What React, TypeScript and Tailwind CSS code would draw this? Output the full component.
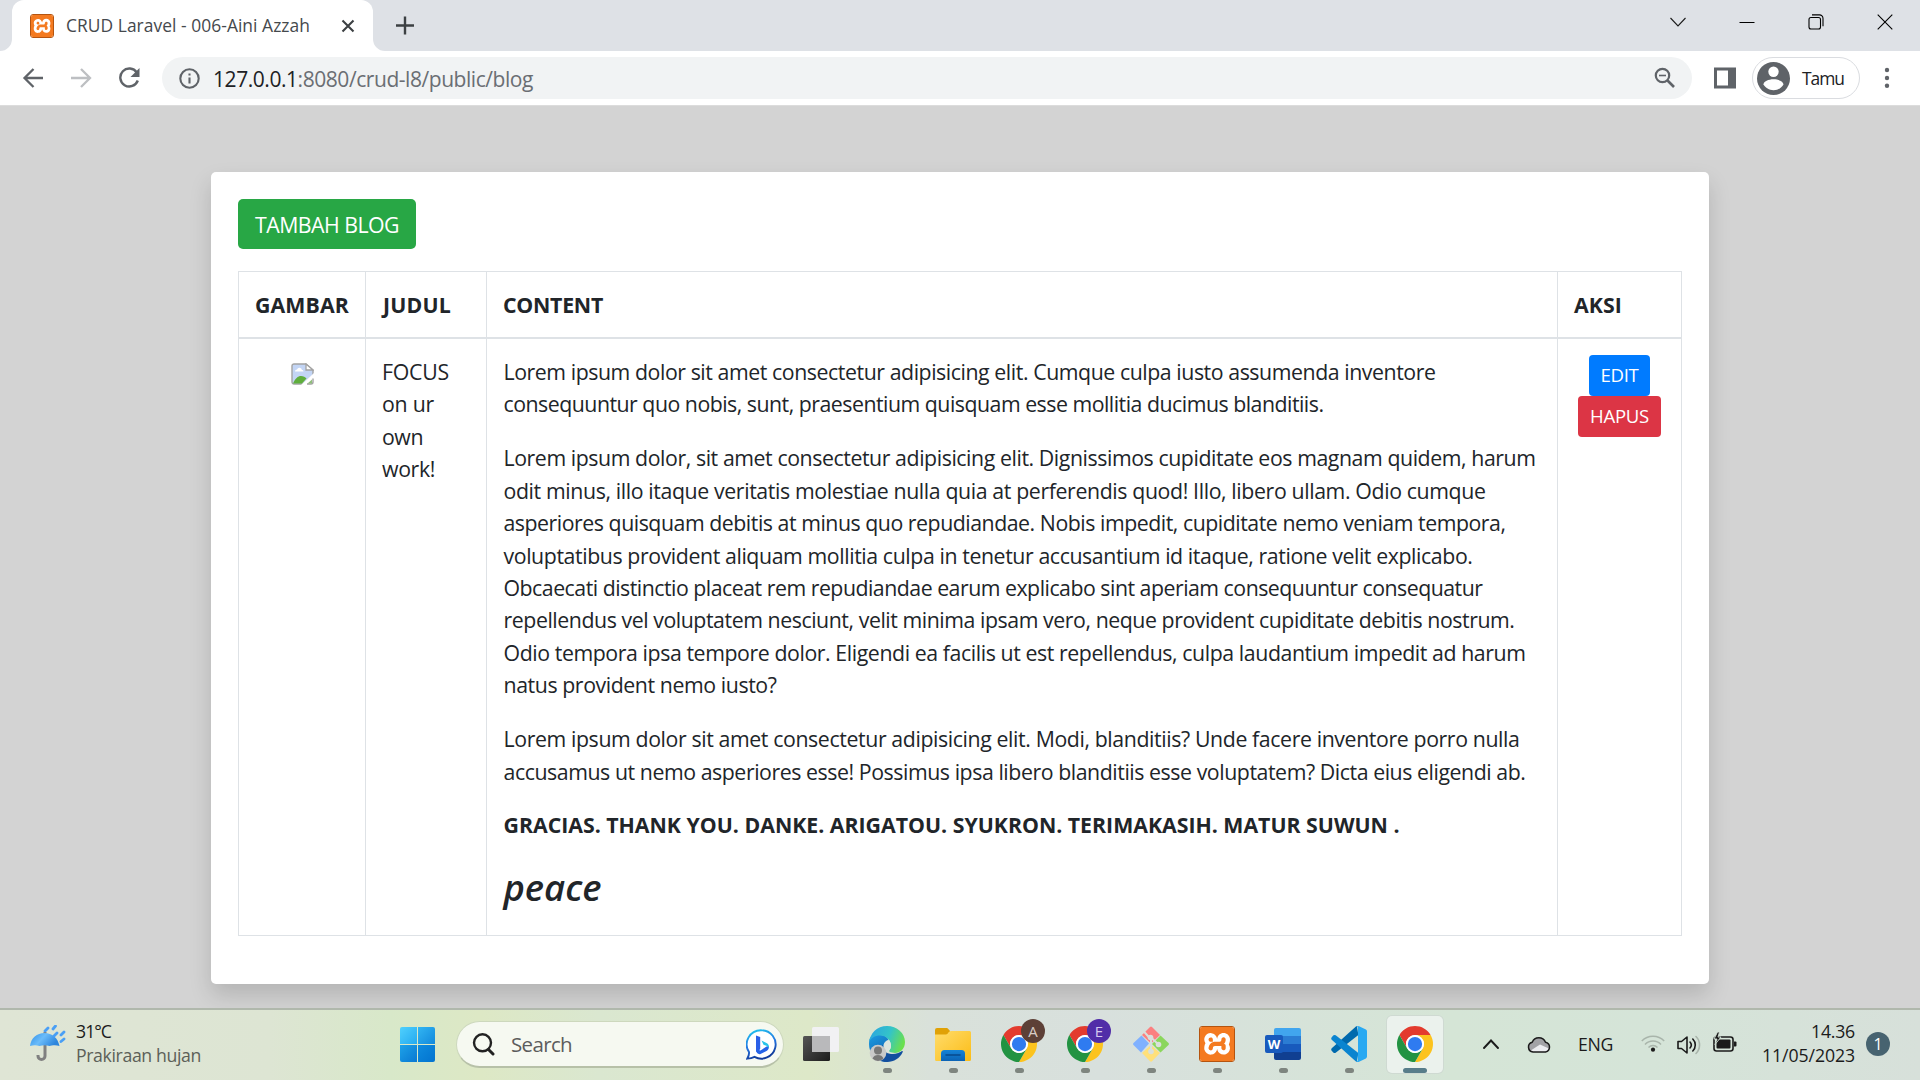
import React, { useLayoutEffect, useRef } from "react";
import { SiXampp } from "react-icons/si";

const SANS = "font-['Open_Sans','Noto_Sans',sans-serif]";

/* A single line of text whose tracking is adjusted to fill the given width. */
function Line({ w, className = "", children }: { w: number; className?: string; children: React.ReactNode }) {
  const ref = useRef<HTMLSpanElement>(null);
  useLayoutEffect(() => {
    const el = ref.current;
    if (!el) return;
    const fit = () => {
      el.style.letterSpacing = "0px";
      const n = (el.textContent || "").length;
      el.style.letterSpacing = `${(w - el.getBoundingClientRect().width) / n}px`;
    };
    fit();
    document.fonts?.ready.then(fit);
  }, [w]);
  return (
    <span className={`block w-fit whitespace-nowrap ${className}`} ref={ref}>
      {children}
    </span>
  );
}

function Xampp({ className }: { className: string }) {
  return (
    <span className={`flex items-center justify-center overflow-hidden rounded-[3px] border border-[#b5540f] bg-white ${className}`}>
      <SiXampp className="size-full shrink-0 scale-[1.04] text-[#f47a20]" />
    </span>
  );
}

function TabStrip() {
  return (
    <div className="flex h-[51px] items-end bg-[#dee1e6]">
      <svg className="h-[51px] w-3 shrink-0" viewBox="0 0 12 51">
        <path d="M12 39A12 12 0 0 1 0 51H12Z" fill="#fff" />
      </svg>
      <div className="flex h-[51px] w-[361px] items-center rounded-t-[12px] bg-white pl-[18px]">
        <Xampp className="size-6" />
        <div className="mb-px ml-3 w-[275px] text-[17.4px] leading-[24px] text-[#45494d]">
          <Line w={244}>CRUD Laravel - 006-Aini Azzah</Line>
        </div>
        <svg className="size-[14px]" viewBox="0 0 14 14" fill="none" stroke="#3c4043" strokeWidth="2.1">
          <path d="M1.5 1.5l11 11M12.500 1.500l-11 11" />
        </svg>
      </div>
      <svg className="h-[51px] w-3 shrink-0" viewBox="0 0 12 51">
        <path d="M0 39A12 12 0 0 0 12 51H0Z" fill="#fff" />
      </svg>
      <svg className="ml-[11px] h-[51px] w-[18px]" viewBox="0 0 18 51" fill="none" stroke="#3c4043" strokeWidth="2.4">
        <path d="M0 25.500h18M9 16.500v18" />
      </svg>
      <div className="ml-auto flex h-[43px] items-center gap-[53px] self-start pr-[27px]">
        <svg className="size-4" viewBox="0 0 16 16" fill="none" stroke="#1a1a1a" strokeWidth="1.1">
          <path d="M.5 4l7.500 8 7.500-8" />
        </svg>
        <svg className="size-4" viewBox="0 0 16 16" fill="none" stroke="#000" strokeWidth="1">
          <path d="M.5 8.500h15" />
        </svg>
        <svg className="size-4" viewBox="0 0 16 16" fill="none" stroke="#000" strokeWidth="1.1">
          <rect x="1" y="3.500" width="11.500" height="11.500" rx="2" />
          <path d="M4 .9h7.500a3.500 3.500 0 0 1 3.500 3.500v7.800" />
        </svg>
        <svg className="size-4" viewBox="0 0 16 16" fill="none" stroke="#000" strokeWidth="1.1">
          <path d="M.7.7l14.600 14.600M15.300.7L.7 15.300" />
        </svg>
      </div>
    </div>
  );
}

function Toolbar() {
  return (
    <div className="flex h-[54px] items-center bg-white pl-[22px]">
      <svg className="size-[22px]" viewBox="0 0 22 22" fill="none" stroke="#5f6368" strokeWidth="2.3">
        <path d="M21 11H3M11.500 2L2.500 11l9 9" />
      </svg>
      <svg className="ml-[27px] size-[22px]" viewBox="0 0 22 22" fill="none" stroke="#bdbfc2" strokeWidth="2.3">
        <path d="M0 11h18M10 2l9 9-9 9" />
      </svg>
      <svg className="ml-[25px] size-[22px]" viewBox="0 0 22 22" fill="none" stroke="#5f6368" strokeWidth="2.4">
        <path d="M18.800 5.500A9 9 0 1 0 19.800 13.500" />
        <path d="M21.500 1v9h-9z" fill="#5f6368" stroke="none" />
      </svg>
      <div className="ml-[22px] flex h-[42px] w-[1530px] items-center rounded-full bg-[#f1f3f4] pl-[17px] pr-[16px]">
        <svg className="size-[21px]" viewBox="0 0 21 21" fill="none" stroke="#5f6368" strokeWidth="2.100">
          <circle cx="10.500" cy="10.500" r="9.200" />
          <path d="M10.500 9.500v6M10.500 5.400v2.200" />
        </svg>
        <div className="ml-[13px] mt-px text-[21px] leading-[30px] text-[#6a6e73]">
          <Line w={320}>
            <span className="text-[#202124]">127.0.0.1</span>:8080/crud-l8/public/blog
          </Line>
        </div>
        <svg className="ml-auto size-[22px]" viewBox="0 0 22 22" fill="none" stroke="#5f6368" strokeWidth="2.200">
          <circle cx="8.500" cy="8.500" r="6.700" />
          <path d="M5 8.500h7" strokeWidth="1.600" />
          <path d="M13.500 13.500l6.500 6.500" strokeWidth="2.700" />
        </svg>
      </div>
      <svg className="ml-[22px] size-[22px]" viewBox="0 0 22 22">
        <path fillRule="evenodd" d="M0 .5h22v21H0zM3 3.500v15h11v-15z" fill="#5f6368" />
      </svg>
      <div className="ml-[16px] flex h-[42px] w-[108px] items-center rounded-full border border-[#dadce0] pl-[4px]">
        <svg className="size-[33px]" viewBox="0 0 33 33">
          <circle cx="16.500" cy="16.500" r="16.500" fill="#5f6368" />
          <circle cx="16.500" cy="9.800" r="5.200" fill="#fff" />
          <path d="M6.500 22.500c0-3 5-5.200 10-5.200s10 2.200 10 5.200c-2 3.200-5.500 5.700-10 5.700s-8-2.500-10-5.700z" fill="#fff" />
        </svg>
        <div className="mb-px ml-[12px] text-[17.400px] leading-[24px] text-[#202124]">
          <Line w={42}>Tamu</Line>
        </div>
      </div>
      <svg className="ml-[24px] h-[22px] w-[6px]" viewBox="0 0 6 22" fill="#5f6368">
        <circle cx="3" cy="3" r="2.200" />
        <circle cx="3" cy="11" r="2.200" />
        <circle cx="3" cy="18.700" r="2.200" />
      </svg>
    </div>
  );
}

function BrokenImage() {
  return (
    <svg className="h-[22px] w-[23px]" viewBox="0 0 23 22">
      <path d="M3 1h12l7 6v5.500L12 21H3a2 2 0 0 1-2-2V3a2 2 0 0 1 2-2z" fill="#c3d5f5" stroke="#a3a3a3" strokeWidth="1.400" />
      <path d="M15 1v6h7z" fill="#fff" stroke="#a3a3a3" strokeWidth="1.300" />
      <path d="M4 8.500a2 2 0 0 1 2-2 2.600 2.600 0 0 1 5 .5c1 0 1.500.7 1.500 1.500z" fill="#fff" />
      <path d="M2 20.500c2-5 5-7.500 8-7.500 2.500 0 4 1 5.500 2.500L11 20.500z" fill="#5fae3c" />
      <path d="M23 10L10 22h5l8-7z" fill="#fff" />
      <path d="M22 15.500V19a2 2 0 0 1-2 2h-4" fill="none" stroke="#a3a3a3" strokeWidth="1.400" />
      <path d="M16.500 20.500l4.500-4v4z" fill="#8fbf7a" />
    </svg>
  );
}

const PARAGRAPHS: [string, number][][] = [
  [
    ["Lorem ipsum dolor sit amet consectetur adipisicing elit. Cumque culpa iusto assumenda inventore", 932],
    ["consequuntur quo nobis, sunt, praesentium quisquam esse mollitia ducimus blanditiis.", 820],
  ],
  [
    ["Lorem ipsum dolor, sit amet consectetur adipisicing elit. Dignissimos cupiditate eos magnam quidem, harum", 1032],
    ["odit minus, illo itaque veritatis molestiae nulla quia at perferendis quod! Illo, libero ullam. Odio cumque", 982],
    ["asperiores quisquam debitis at minus quo repudiandae. Nobis impedit, cupiditate nemo veniam tempora,", 1002],
    ["voluptatibus provident aliquam mollitia culpa in tenetur accusantium id itaque, ratione velit explicabo.", 969],
    ["Obcaecati distinctio placeat rem repudiandae earum explicabo sint aperiam consequuntur consequatur", 979],
    ["repellendus vel voluptatem nesciunt, velit minima ipsam vero, neque provident cupiditate debitis nostrum.", 1011],
    ["Odio tempora ipsa tempore dolor. Eligendi ea facilis ut est repellendus, culpa laudantium impedit ad harum", 1022],
    ["natus provident nemo iusto?", 273],
  ],
  [
    ["Lorem ipsum dolor sit amet consectetur adipisicing elit. Modi, blanditiis? Unde facere inventore porro nulla", 1016],
    ["accusamus ut nemo asperiores esse! Possimus ipsa libero blanditiis esse voluptatem? Dicta eius eligendi ab.", 1022],
  ],
];

function Page() {
  return (
    <div className="h-[903px] overflow-hidden border-t border-[#dcdcdc] bg-[#d3d3d3] pl-[211px] pt-[66px]">
      <main className="h-[812px] w-[1498px] rounded-[5px] bg-white px-[27px] pt-[27px] text-[21.300px] leading-[32.400px] text-[#212529] shadow-[0_11px_22px_rgba(0,0,0,0.15)]">
        <button className="flex h-[50px] w-[178px] items-center rounded-[5px] bg-[#28a745] pl-[17px] pt-[3px] text-white">
          <Line w={144}>TAMBAH BLOG</Line>
        </button>
        <div className="mt-[22px] grid h-[665px] w-[1444px] grid-cols-[127px_121px_1071px_1fr] grid-rows-[67px_1fr] border border-[#dee2e6]">
          {(
            [
              ["GAMBAR", 94],
              ["JUDUL", 68],
              ["CONTENT", 100],
              ["AKSI", 48],
            ] as [string, number][]
          ).map(([t, w]) => (
            <div
              key={t}
              className={`border-b-2 border-r border-[#dee2e6] pt-[17px] font-bold [&:nth-child(4)]:border-r-0 ${
                t === "JUDUL" ? "pl-[17px]" : "pl-4"
              }`}
            >
              <Line w={w}>{t}</Line>
            </div>
          ))}
          <div className="flex items-start justify-center border-r border-[#dee2e6] pt-[24px]">
            <BrokenImage />
          </div>
          <div className="border-r border-[#dee2e6] pl-4 pt-[17px]">
            <Line w={67}>FOCUS</Line>
            <Line w={52}>on ur</Line>
            <Line w={41}>own</Line>
            <Line w={53}>work!</Line>
          </div>
          <div className="border-r border-[#dee2e6] pl-[16.500px] pt-[17px]">
            {PARAGRAPHS.map((lines, i) => (
              <p key={i} className="mb-[21.600px]">
                {lines.map(([t, w]) => (
                  <Line key={t} w={w}>
                    {t}
                  </Line>
                ))}
              </p>
            ))}
            <p className="-mt-px mb-[21.600px] font-bold">
              <Line w={896}>GRACIAS. THANK YOU. DANKE. ARIGATOU. SYUKRON. TERIMAKASIH. MATUR SUWUN .</Line>
            </p>
            <h3 className="pt-[2px] text-[36.500px] font-semibold italic leading-[45.400px]">
              <Line w={98}>peace</Line>
            </h3>
          </div>
          <div className="flex flex-col items-center pt-4 text-[18.600px] leading-[28px] text-white">
            <div className="flex h-[41px] w-[61px] items-center justify-center rounded-[4px] bg-[#007bff] pb-px">
              <Line w={38}>EDIT</Line>
            </div>
            <div className="flex h-[41px] w-[83px] items-center justify-center rounded-[4px] bg-[#dc3545] pb-px">
              <Line w={59}>HAPUS</Line>
            </div>
          </div>
        </div>
      </main>
    </div>
  );
}

function Chrome() {
  return (
    <svg className="size-9" viewBox="0 0 48 48">
      <path d="M24 12H44.780A24 24 0 0 0 3.220 12L13.610 30A12 12 0 0 1 24 12z" fill="#e33b2e" />
      <path d="M34.390 30L24 48A24 24 0 0 0 44.780 12H24A12 12 0 0 1 34.390 30z" fill="#fcc31e" />
      <path d="M13.610 30L3.220 12A24 24 0 0 0 24 48L34.390 30A12 12 0 0 1 13.610 30z" fill="#229342" />
      <circle cx="24" cy="24" r="12" fill="#fff" />
      <circle cx="24" cy="24" r="9.500" fill="#2f7bf0" />
    </svg>
  );
}

function Badged({ letter, className }: { letter: string; className: string }) {
  return (
    <div className="relative">
      <Chrome />
      <span className={`absolute -top-[7px] left-[20px] flex size-6 items-center justify-center rounded-full text-[15px] leading-none ${className}`}>
        {letter}
      </span>
    </div>
  );
}

function TaskView() {
  return (
    <svg className="size-9" viewBox="0 0 36 36">
      <defs>
        <linearGradient id="tv" x1="0" y1="0" x2="1" y2="1">
          <stop offset="0" stopColor="#555" />
          <stop offset="1" stopColor="#1c1c1c" />
        </linearGradient>
      </defs>
      <rect x="0" y="10" width="27" height="25" rx="1.500" fill="url(#tv)" />
      <rect x="9" y="1" width="27" height="25" rx="1.500" fill="#f1f1f3" />
      <rect x="9" y="10" width="18" height="16" fill="#b9b9bb" />
    </svg>
  );
}

function Edge() {
  return (
    <svg className="size-9 overflow-visible" viewBox="0 0 36 36">
      <defs>
        <linearGradient id="eg" x1="0" y1="0.200" x2="1" y2="0.500">
          <stop offset="0" stopColor="#2aa5e0" />
          <stop offset="0.550" stopColor="#34c4c8" />
          <stop offset="1" stopColor="#6be04c" />
        </linearGradient>
        <linearGradient id="eb" x1="0" y1="0" x2="0.600" y2="1">
          <stop offset="0" stopColor="#1b9de2" />
          <stop offset="1" stopColor="#0f5cae" />
        </linearGradient>
      </defs>
      <path d="M0 18C0 8 5 9 12 9c5 0 8 4 8 7-4 1-6 4-5 8 1 5 6 7 10 7-3 3-6 5-9 5C6 35 0 27 0 18z" fill="url(#eb)" />
      <path d="M14 19c-1 5 3 9 9 9 5 0 8-2 10-3 1 0 1 .5.500 1.500C31 32 25 36 18 36c-3 0-6-1-8-3-1-5 0-11 4-14z" fill="#124f9e" />
      <path d="M0 17C1 7 8 0 18 0s18 7 18 16c0 7-5 11-10 11-4 0-6-1-6-2 0-1 2-2 2-5 0-6-5-10.500-11-10.500C6 9.500 1 12 0 17z" fill="url(#eg)" />
      <path d="M14.500 19c.5-3 3-5 5.500-5 1.500 1.800 2 4 2 6 0 3-2 4-2 5 0 1 2 2 6 2-3 1-7 0-9-2-1.800-1.800-2.700-4-2.500-6z" fill="#dce4de" />
      <circle cx="9" cy="27" r="8.300" fill="#c9c9c9" />
      <circle cx="9" cy="24.500" r="4" fill="#777" />
      <path d="M3.500 32.500c1-2.500 3-3.500 5.500-3.500s4.500 1 5.500 3.500A8 8 0 0 1 9 35a8 8 0 0 1-5.500-2.500z" fill="#777" />
    </svg>
  );
}

function Folder() {
  return (
    <svg className="size-9" viewBox="0 0 36 36">
      <defs>
        <linearGradient id="fo" x1="0" y1="0" x2="1" y2="1">
          <stop offset="0" stopColor="#ffdc6b" />
          <stop offset="1" stopColor="#fbbc16" />
        </linearGradient>
        <linearGradient id="fb" x1="0" y1="0" x2="0" y2="1">
          <stop offset="0" stopColor="#1583d6" />
          <stop offset="1" stopColor="#0b63b5" />
        </linearGradient>
      </defs>
      <path d="M0 4a2 2 0 0 1 2-2h9c1.500 0 2 .5 4 3v6H0z" fill="#e0a106" />
      <path d="M0 8.500h11c2 0 2.500-3.500 5-3.500h18.500A1.500 1.500 0 0 1 36 6.500v27a1.500 1.500 0 0 1-1.500 1.500h-33A1.500 1.500 0 0 1 0 33.500z" fill="url(#fo)" />
      <path d="M6 35v-7.500a3.500 3.500 0 0 1 3.500-3.500h17a3.500 3.500 0 0 1 3.500 3.500V35z" fill="url(#fb)" />
      <path d="M11 29h14" stroke="#074a8c" strokeWidth="1.500" strokeLinecap="round" />
    </svg>
  );
}

function Git() {
  return (
    <svg className="size-9" viewBox="0 0 36 36">
      <path d="M17 .9a1.500 1.500 0 0 1 2 0l8 8-9 8.500-9-8.500z" fill="#fb8080" />
      <path d="M27.500 9.500l8 7.500a1.500 1.500 0 0 1 0 2l-8 7.500-8.500-8.500z" fill="#8bd65c" />
      <path d="M8.500 9.500l7.500 8-8 9L.5 19a1.500 1.500 0 0 1 0-2z" fill="#80b1ff" />
      <path d="M18 19l9 8-8 8.200a1.500 1.500 0 0 1-2 0L9 27z" fill="#ffe07a" />
      <path d="M10 4.500l8 9V26M17.500 11l8 7.500" fill="none" stroke="#d9e0dc" strokeWidth="2" />
      <circle cx="17.500" cy="11.500" r="2.800" fill="#d9e0dc" />
      <circle cx="25.500" cy="18.500" r="2.800" fill="#d9e0dc" />
      <circle cx="18" cy="25.500" r="2.800" fill="#d9e0dc" />
    </svg>
  );
}

function Word() {
  return (
    <div className="relative flex size-9 items-center justify-end">
      <div className="mb-px h-8 w-[27px] overflow-hidden rounded-[2px]">
        <div className="h-2 bg-[#41a5ee]" />
        <div className="h-2 bg-[#2b7cd3]" />
        <div className="h-2 bg-[#185abd]" />
        <div className="h-2 bg-[#103f91]" />
      </div>
      <span className="absolute left-0 top-[9px] flex size-[18px] items-center justify-center rounded-[2px] bg-[#185abd] text-[13px] font-bold leading-none text-white">
        W
      </span>
    </div>
  );
}

function VSCode() {
  return (
    <svg className="size-9" viewBox="0 0 100 100">
      <path d="M72 1l4 24L13 74q-3 2-6 0L2 69q-3-3 0-7L70 1z" fill="#0069ad" />
      <path d="M72 99l4-24L13 26q-3-2-6 0L2 31q-3 4 0 7L70 99z" fill="#0a84d0" />
      <path d="M70 1q4-2 8 0l19 9q3 2 3 5v70q0 3-3 5l-19 9q-4 2-8 0 5 0 5-5V6q0-5-5-5z" fill="#29a9f2" />
    </svg>
  );
}

function Slot({ children, active = false, dot = true }: { children: React.ReactNode; active?: boolean; dot?: boolean }) {
  return (
    <div
      className={`flex h-[57px] w-14 shrink-0 flex-col items-center rounded-[5px] pt-[10px] ${
        active ? "bg-[#ebf2ed] shadow-[0_0_0_1px_#cfdad2]" : ""
      }`}
    >
      {children}
      {dot && <span className={`mt-[6px] h-[5px] rounded-full ${active ? "w-6 bg-[#587d8a]" : "w-[9px] bg-[#7e857f]"}`} />}
    </div>
  );
}

function Taskbar() {
  return (
    <div className="flex h-[72px] items-center border-t-2 border-[#b0b8ac] bg-[linear-gradient(90deg,#dfe5d5_0px,#dde5d3_270px,#d8e8c9_390px,#dde8c5_480px,#dae7d0_600px,#dde8c8_810px,#d9e1da_930px,#d8e0dd_1100px,#d5e5d6_1450px,#d5e4d8_1650px,#d7e0da_1920px)] text-[17.700px] leading-[24px] text-[#1b1b1b]">
      <svg className="mb-[3px] ml-[29px] size-[37px]" viewBox="0 0 37 37">
        <defs>
          <linearGradient id="um" x1="0" y1="0" x2="1" y2="0.400">
            <stop offset="0" stopColor="#2f8fe8" />
            <stop offset="0.500" stopColor="#6bbcfa" />
            <stop offset="1" stopColor="#2e86dd" />
          </linearGradient>
        </defs>
        <path d="M16 7v24a3.500 3.500 0 0 1-7 0v-1" fill="none" stroke="#808080" strokeWidth="3" />
        <path d="M1 21C2 13 8 8 15.500 8S29 13 30.500 21c-4-1.200-8-.5-10 0-3-1-7-1-10 0-3-1-6-1-9.500 0z" fill="url(#um)" />
        <path d="M19 3l-3 3M26.500 1l-2.500 3M28 8l-3 3M35 7l-3 3M35 14l-3 2.500" stroke="#4a9ff5" strokeWidth="2.800" strokeLinecap="round" />
      </svg>
      <div className="mb-[2px] ml-[10px] h-[50px] w-[324px]">
        <Line w={35}>31°C</Line>
        <Line w={125} className="text-[#5c6058]">
          Prakiraan hujan
        </Line>
      </div>
      <div className="mb-px grid size-[35px] grid-cols-2 gap-px">
        <span className="rounded-tl-[2px] bg-linear-to-br from-[#4fd0fd] to-[#22aaf0]" />
        <span className="rounded-tr-[2px] bg-linear-to-br from-[#32b5f2] to-[#1189dc]" />
        <span className="rounded-bl-[2px] bg-linear-to-br from-[#1ea2e8] to-[#0a78d2]" />
        <span className="rounded-br-[2px] bg-linear-to-br from-[#0f8cdf] to-[#0473cf]" />
      </div>
      <div className="mb-px ml-[21px] flex h-[47px] w-[328px] items-center rounded-full border border-b-2 border-[#cdd8bd] border-b-[#b7c1a8] bg-[#f6f9f1] pl-[15px] pr-[6px]">
        <svg className="size-[23px]" viewBox="0 0 23 23" fill="none" stroke="#222" strokeWidth="2.400" strokeLinecap="round">
          <circle cx="10.500" cy="9.800" r="8.500" />
          <path d="M16.500 16.500L21 21" strokeWidth="3" />
        </svg>
        <div className="ml-[16px] text-[20.500px] text-[#5c5c5c]">
          <Line w={61}>Search</Line>
        </div>
        <svg className="ml-auto size-[31px]" viewBox="0 0 31 31">
          <defs>
            <linearGradient id="bg" x1="0" y1="0" x2="0.300" y2="1">
              <stop offset="0" stopColor="#1fc8f0" />
              <stop offset="0.600" stopColor="#2474e0" />
              <stop offset="1" stopColor="#123c9c" />
            </linearGradient>
          </defs>
          <path d="M15.500 1.200a14.200 14.200 0 1 1-7 26.600c-2 1-4 1.600-7.200 1.800 1.500-2.500 2-4 1.700-6.500A14.200 14.200 0 0 1 15.500 1.200z" fill="#fff" stroke="url(#bg)" strokeWidth="1.900" />
          <path d="M10 6.500l4.200 1.600v11.400l-2.100 4.800-2.100-2z" fill="#2a5fe8" />
          <path d="M10 20.500l4.500 1 6-4 2.500-.5c0 3-1 4-2.500 5l-6 3c-2 .8-4.500-1-4.500-4.500z" fill="#2563e8" />
          <path d="M15.500 11.500l5 2.500c2 1 2.700 2.500 2.500 5-1-2-4-2.500-5.500-3.200z" fill="#26c3ea" />
        </svg>
      </div>
      <div className="mb-px ml-[9px] flex gap-[10px]">
        <Slot dot={false}><TaskView /></Slot>
        <Slot><Edge /></Slot>
        <Slot><Folder /></Slot>
        <Slot><Badged letter="A" className="bg-[#5d4037] text-[#d9ccc7]" /></Slot>
        <Slot><Badged letter="E" className="bg-[#512da8] text-[#d5c9ee]" /></Slot>
        <Slot><Git /></Slot>
        <Slot><Xampp className="size-9" /></Slot>
        <Slot><Word /></Slot>
        <Slot><VSCode /></Slot>
        <Slot active><Chrome /></Slot>
      </div>
      <svg className="mb-[2px] ml-[40px] h-3 w-4 shrink-0" viewBox="0 0 16 12" fill="none" stroke="#1b1b1b" strokeWidth="1.900" strokeLinecap="round">
        <path d="M1 10l7-7.500 7 7.500" />
      </svg>
      <svg className="mb-[2px] ml-[28px] h-[17px] w-6 shrink-0" viewBox="0 0 24 17">
        <path d="M6 16a5 5 0 0 1-.8-9.800A7.200 7.200 0 0 1 18.500 6.200 5 5 0 0 1 18.500 16z" fill="#a2a2a6" />
        <path d="M3 15l10-6.500 10 4.500c-1 2-2.500 3-4.500 3H6z" fill="#ececf0" />
        <path d="M6 16a5 5 0 0 1-.8-9.800A7.200 7.200 0 0 1 18.500 6.200 5 5 0 0 1 18.500 16z" fill="none" stroke="#1b1b1b" strokeWidth="1.500" />
      </svg>
      <div className="mb-[2px] ml-[27px] w-[63px]">
        <Line w={35}>ENG</Line>
      </div>
      <svg className="mb-1 h-[18px] w-6 shrink-0" viewBox="0 0 24 18" fill="none" strokeWidth="1.500">
        <path d="M.8 7a15.500 15.500 0 0 1 22.400 0M4 10.500a11 11 0 0 1 16 0" stroke="#a9b5ab" />
        <path d="M7.500 13.500a6.300 6.300 0 0 1 9 0" stroke="#a9b5ab" />
        <circle cx="12" cy="15.700" r="2.100" fill="#1b1b1b" />
      </svg>
      <svg className="mb-px ml-3 h-[20px] w-6 shrink-0" viewBox="0 0 24 20" fill="none" stroke="#1b1b1b" strokeWidth="1.600" strokeLinecap="round" strokeLinejoin="round">
        <path d="M1 6.500h3.500L10 2v16l-5.500-4.500H1z" />
        <path d="M13 7a4.500 4.500 0 0 1 0 6M15.800 4a8.500 8.500 0 0 1 0 12" />
        <path d="M19 1.500a12 12 0 0 1 0 17" stroke="#a9b5ab" />
      </svg>
      <svg className="mb-[6px] ml-3 h-[20px] w-6 shrink-0" viewBox="0 0 24 20">
        <rect x="1" y="5" width="19" height="14" rx="2.500" fill="none" stroke="#1b1b1b" strokeWidth="1.600" />
        <rect x="3.500" y="7.500" width="14" height="9" rx="1" fill="#1b1b1b" />
        <path d="M21 9.500h1.500a1 1 0 0 1 1 1v3a1 1 0 0 1-1 1H21z" fill="#1b1b1b" />
        <path d="M4.500 0L1 7h3l-2 5.500L8 5H5l1.500-5z" fill="#1b1b1b" stroke="#d5e2d8" strokeWidth="0.900" />
      </svg>
      <div className="mb-[2px] ml-[24px] flex h-[50px] w-[94px] flex-col items-end">
        <Line w={44}>14.36</Line>
        <Line w={93}>11/05/2023</Line>
      </div>
      <span className="mb-[2px] ml-[11px] flex size-6 items-center justify-center rounded-full bg-[#476370] text-[16px] leading-none text-white">1</span>
    </div>
  );
}

export default function App() {
  return (
    <div className={`h-[1080px] w-[1920px] overflow-hidden ${SANS}`}>
      <TabStrip />
      <Toolbar />
      <Page />
      <Taskbar />
    </div>
  );
}
